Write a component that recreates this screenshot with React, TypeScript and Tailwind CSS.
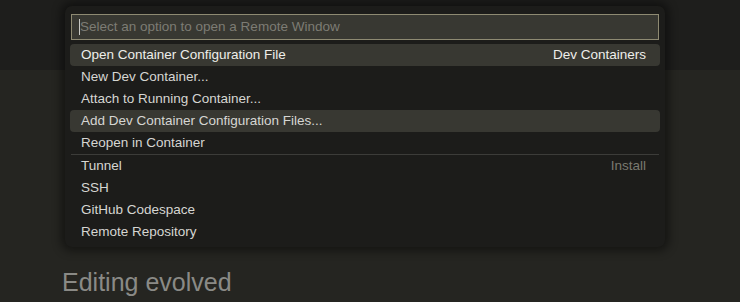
const groups = [
  [
    { label: "Open Container Configuration File", detail: "Dev Containers", active: true },
    { label: "New Dev Container..." },
    { label: "Attach to Running Container..." },
    { label: "Add Dev Container Configuration Files...", hover: true },
    { label: "Reopen in Container" },
  ],
  [
    { label: "Tunnel", detail: "Install", muted: true },
    { label: "SSH" },
    { label: "GitHub Codespace" },
    { label: "Remote Repository" },
  ],
];

type Item = { label: string; detail?: string; active?: boolean; hover?: boolean; muted?: boolean };

const Row = ({ item }: { item: Item }) => (
  <div
    className={
      "flex h-[22px] items-center justify-between rounded-[4px] pl-[11px] pr-[14px] pt-[1px] " +
      (item.active || item.hover ? "bg-[#383832]" : "")
    }
  >
    <span className={item.active ? "text-[#eeeeea]" : "text-[#d6d6d2]"}>{item.label}</span>
    {item.detail && (
      <span className={item.muted ? "text-[#7a7970]" : "text-[#eeeeea]"}>{item.detail}</span>
    )}
  </div>
);

const App = () => {
  return (
    <div className="relative flex h-[302px] w-[740px] flex-col overflow-hidden bg-[#252521] font-['Liberation_Sans',Arial,sans-serif]">
      {/* title bar area */}
      <div className="h-[70px] bg-[#1e1e1c]" />
      {/* welcome page, mostly under the picker */}
      <div className="flex flex-col pl-[62px] pt-[197px]">
        <h2 className="text-[25px] leading-[30px] text-[#8a8a86]">Editing evolved</h2>
      </div>

      {/* quick pick */}
      <div className="absolute left-[65px] top-[6px] w-[600px] rounded-[7px] bg-[#1c1c1a] px-[5px] pt-[8px] pb-[4px] text-[13.5px] shadow-[0_0_10px_4px_rgba(0,0,0,0.45)]">
        <div className="mx-[1px] flex h-[26px] items-center border border-[#8e8a72] bg-[#383832] pl-[7px]">
          <span className="h-[16px] w-px bg-[#c8c8c4]" />
          <span className="text-[#7d7c74]">Select an option to open a Remote Window</span>
        </div>
        <div className="mt-[4px] flex flex-col">
          {groups[0].map((it) => (
            <Row key={it.label} item={it} />
          ))}
        </div>
        <div className="mx-[1px] h-px bg-[#3c3c39]" />
        <div className="flex flex-col">
          {groups[1].map((it) => (
            <Row key={it.label} item={it} />
          ))}
        </div>
      </div>
    </div>
  );
};

export default App;
